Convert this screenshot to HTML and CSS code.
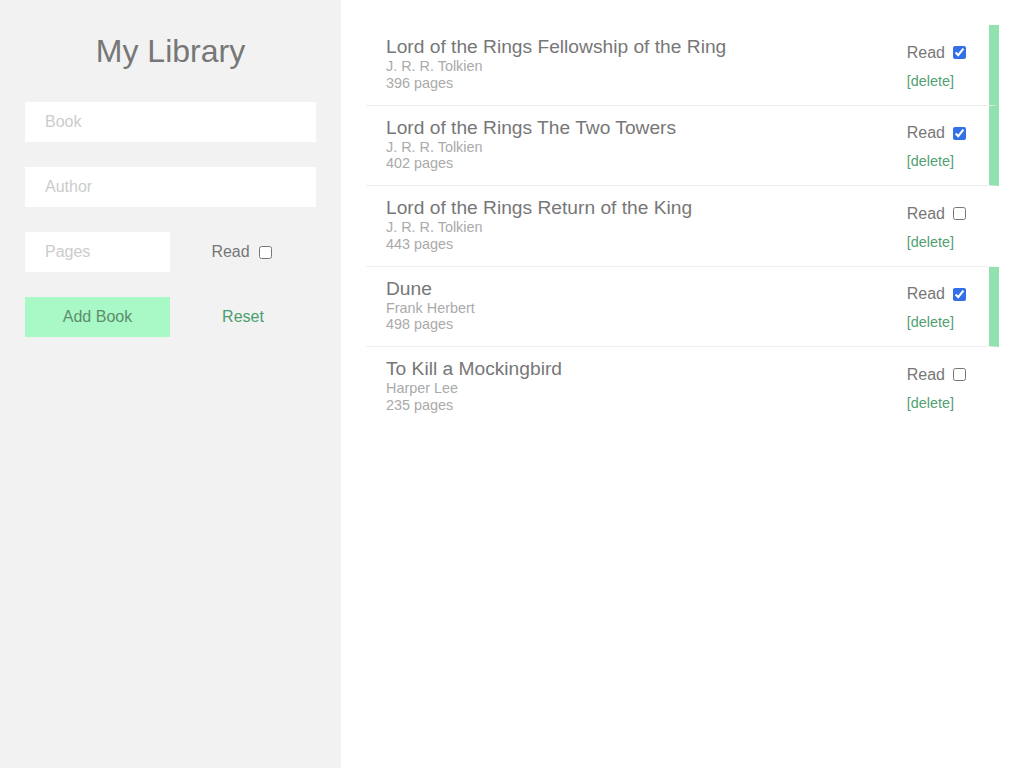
FILE: index.html
```html
<!DOCTYPE html>
<html>
<head>
<meta charset="utf-8">
<link rel="stylesheet" href="styles.css">
</head>
<body>
<div class="app">
  <aside class="sidebar">
    <h1 class="title">My Library</h1>
    <form class="form">
      <input class="field wide" type="text" placeholder="Book">
      <input class="field wide" type="text" placeholder="Author">
      <input class="field" type="text" placeholder="Pages">
      <label class="read-label">Read <input type="checkbox"></label>
      <button type="button" class="btn add">Add Book</button>
      <button type="button" class="btn reset">Reset</button>
    </form>
  </aside>
  <main class="main">
    <ul class="list">
      <li class="book is-read">
        <div class="info">
          <div class="book-title">Lord of the Rings Fellowship of the Ring</div>
          <div class="meta">J. R. R. Tolkien</div>
          <div class="meta">396 pages</div>
        </div>
        <div class="actions">
          <label class="read">Read <input type="checkbox" checked></label>
          <a class="delete">[delete]</a>
        </div>
      </li>
      <li class="book is-read">
        <div class="info">
          <div class="book-title">Lord of the Rings The Two Towers</div>
          <div class="meta">J. R. R. Tolkien</div>
          <div class="meta">402 pages</div>
        </div>
        <div class="actions">
          <label class="read">Read <input type="checkbox" checked></label>
          <a class="delete">[delete]</a>
        </div>
      </li>
      <li class="book">
        <div class="info">
          <div class="book-title">Lord of the Rings Return of the King</div>
          <div class="meta">J. R. R. Tolkien</div>
          <div class="meta">443 pages</div>
        </div>
        <div class="actions">
          <label class="read">Read <input type="checkbox"></label>
          <a class="delete">[delete]</a>
        </div>
      </li>
      <li class="book is-read">
        <div class="info">
          <div class="book-title">Dune</div>
          <div class="meta">Frank Herbert</div>
          <div class="meta">498 pages</div>
        </div>
        <div class="actions">
          <label class="read">Read <input type="checkbox" checked></label>
          <a class="delete">[delete]</a>
        </div>
      </li>
      <li class="book">
        <div class="info">
          <div class="book-title">To Kill a Mockingbird</div>
          <div class="meta">Harper Lee</div>
          <div class="meta">235 pages</div>
        </div>
        <div class="actions">
          <label class="read">Read <input type="checkbox"></label>
          <a class="delete">[delete]</a>
        </div>
      </li>
    </ul>
  </main>
</div>
</body>
</html>
```
FILE: styles.css
```css
* { box-sizing: border-box; }
html, body { margin: 0; padding: 0; height: 100%; }
body {
  font-family: "Liberation Sans", Arial, sans-serif;
  color: #777;
  background: #fff;
}
input[type="checkbox"] { accent-color: #3370e8; }
.app {
  display: flex;
  min-height: 768px;
}
.sidebar {
  width: 341px;
  flex: none;
  background: #f2f2f2;
  padding: 25px;
}
.title {
  margin: 8px 0 32px;
  font-size: 32px;
  line-height: 37px;
  font-weight: normal;
  text-align: center;
  color: #777;
}
.form {
  display: grid;
  grid-template-columns: 145px 146px;
  grid-auto-rows: 40px;
  row-gap: 25px;
}
.field {
  border: none;
  outline: none;
  background: #fff;
  height: 40px;
  padding: 0 20px;
  font-family: "Liberation Sans", Arial, sans-serif;
  font-size: 16px;
  color: #777;
}
.field::placeholder { color: #ccc; }
.wide { grid-column: 1 / 3; }
.read-label {
  display: flex;
  align-items: center;
  justify-content: center;
  font-size: 16px;
  color: #777;
}
.read-label input { margin: 0 3px 0 9px; width: 13px; height: 13px; }
.btn {
  border: none;
  font-family: "Liberation Sans", Arial, sans-serif;
  font-size: 16px;
  height: 40px;
  padding: 0;
  cursor: pointer;
}
.add {
  background: #a8f9c6;
  color: #5e8c6c;
}
.reset {
  background: transparent;
  color: #4a9e6e;
}
.main {
  flex: 1;
  padding: 25px;
}
.list {
  list-style: none;
  margin: 0;
  padding: 0;
}
.book {
  display: flex;
  justify-content: space-between;
  padding: 11px 20px 13.5px;
  border-bottom: 1px solid #eee;
  border-right: 10px solid transparent;
}
.book:last-child { border-bottom: none; }
.book.is-read { border-right-color: #92e2b0; }
.book-title {
  font-size: 19.2px;
  line-height: 22px;
  color: #777;
}
.meta {
  font-size: 14.4px;
  line-height: 16.5px;
  color: #aaa;
}
.actions {
  display: flex;
  flex-direction: column;
  align-items: flex-start;
  justify-content: center;
  gap: 10px;
  padding-top: 5px;
}
.read {
  display: flex;
  align-items: center;
  font-size: 16px;
  line-height: 20px;
  color: #777;
}
.read input { margin: 0 3px 0 8px; width: 13px; height: 13px; }
.delete {
  font-size: 14.4px;
  line-height: 16.5px;
  color: #52a072;
  cursor: pointer;
}
```
